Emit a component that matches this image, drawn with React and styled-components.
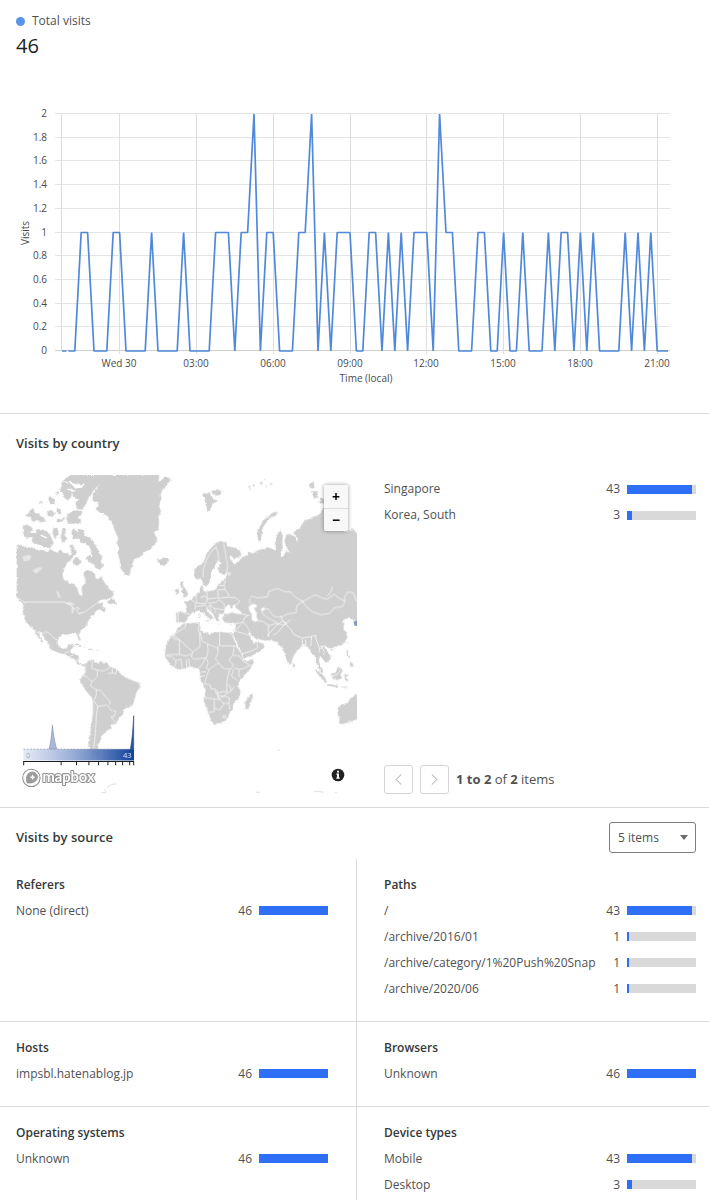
import React from "react"
import styled, { createGlobalStyle } from "styled-components"
import { ChevronLeft, ChevronRight } from "lucide-react"

const font = `"Open Sans", "Noto Sans", sans-serif`
const blue = "#2f6ff5"
const line = "#d9d9d9"

const GlobalStyle = createGlobalStyle`
  * {
    box-sizing: border-box;
  }

  body {
    margin: 0;
    background: #fff;
    color: #4f5153;
    font-family: ${font};
    font-size: 12px;
    line-height: 18px;
  }
`

const Page = styled.main`
  width: 100%;
  overflow: hidden;
`

const ChartSection = styled.section`
  padding: 12px 16px 19px;
  border-bottom: 1px solid ${line};
`

const Legend = styled.div`
  display: flex;
  align-items: center;
  gap: 7px;
`

const Dot = styled.span`
  width: 9px;
  height: 9px;
  border-radius: 50%;
  background: #5a93ea;
`

const Total = styled.div`
  margin-bottom: 40px;
  color: #1d1f20;
  font-size: 20px;
  font-weight: 500;
  line-height: 32px;
`

const Chart = styled.svg`
  display: block;
  width: 100%;
  font-family: ${font};
  font-size: 10px;
  fill: #4a4a4d;
`

const Section = styled.section`
  border-bottom: 1px solid ${line};
`

const Columns = styled.div`
  display: grid;
  grid-template-columns: minmax(0, 357fr) minmax(0, 352fr);
`

const SectionHeader = styled.header`
  display: flex;
  align-items: center;
  justify-content: space-between;
  padding: ${({ $tight }) => ($tight ? "14px 13px 6px 16px" : "19px 16px 22px")};
`

const Title = styled.h2`
  margin: 0;
  color: #36393a;
  font-size: 13px;
  font-weight: 600;
  line-height: 20px;
`

const MapBox = styled.div`
  position: relative;
  margin: 0 0 13px 16px;
`

const MapDrawing = styled.svg`
  display: block;
  width: 100%;
  font-family: ${font};
`

const ZoomControls = styled.div`
  position: absolute;
  top: 10px;
  right: 9px;
  display: flex;
  flex-direction: column;
  width: 24px;
  background: #f8f8f8;
  border-radius: 2px;
  box-shadow: 0 0 4px rgba(0, 0, 0, 0.4);
`

const ZoomButton = styled.button`
  height: 23px;
  padding: 0;
  border: 0;
  background: none;
  color: #000;
  font-family: ${font};
  font-size: 14px;
  font-weight: 700;
  line-height: 22px;

  & + & {
    border-top: 1px solid #ddd;
  }
`

const InfoButton = styled.button`
  position: absolute;
  right: 12px;
  bottom: 12px;
  display: flex;
  padding: 0;
  border: 0;
  background: none;
`

const CountryList = styled.div`
  display: flex;
  flex-direction: column;
  justify-content: space-between;
  padding: 1px 13px 13px 27px;
`

const Table = styled.table`
  width: 100%;
  border-collapse: collapse;
  table-layout: fixed;
`

const NameCell = styled.th`
  height: 26px;
  padding: 0;
  font-weight: 400;
  text-align: left;
  white-space: nowrap;
`

const CountCell = styled.td`
  width: 28px;
  padding: 0 7px 0 0;
  text-align: right;
`

const BarCell = styled.td`
  width: 69px;
  padding: 0;
`

const Track = styled.div`
  height: 9px;
  background: #d9d9d9;
`

const Fill = styled.div`
  min-width: 2px;
  height: 9px;
  background: ${blue};
`

const Pager = styled.nav`
  display: flex;
  align-items: center;
  gap: 7px;
  font-size: 13px;
`

const PageButton = styled.button`
  display: flex;
  align-items: center;
  justify-content: center;
  width: 29px;
  height: 29px;
  padding: 0;
  border: 1px solid #d5d5d5;
  border-radius: 3px;
  background: #fff;
  color: #b3b3b3;
`

const SelectWrap = styled.div`
  position: relative;
`

const Select = styled.select`
  display: block;
  width: 87px;
  height: 31px;
  padding: 0 8px;
  border: 1px solid #7d7d7d;
  border-radius: 3px;
  appearance: none;
  background: #fff;
  color: #4f5153;
  font-family: ${font};
  font-size: 12px;
`

const Caret = styled.span`
  position: absolute;
  top: 13px;
  right: 8px;
  border: 4px solid transparent;
  border-top: 5px solid #6b6b6b;
  border-bottom: 0;
  pointer-events: none;
`

const Panel = styled.article`
  padding: ${({ $right }) => ($right ? "13px 13px 19px 27px" : "13px 28px 19px 16px")};
  border-right: ${({ $right }) => ($right ? "0" : `1px solid ${line}`)};
  border-bottom: 1px solid ${line};

  &:nth-last-child(-n + 2) {
    padding-bottom: 3px;
    border-bottom: 0;
  }
`

const PanelTitle = styled.h3`
  margin: 0;
  color: #36393a;
  font-size: 12px;
  font-weight: 600;
  line-height: 26px;
`

// one sample every 15 minutes
const visits = [
  "0001100011",
  "0000100001",
  "0000111011",
  "2011000112",
  "0101110011",
  "0101011102",
  "1100011001",
  "0010001011",
  "0101000010",
  "10100",
].join("")

const samples = [...visits].map(Number)
const chartX = i => 46 + i * 6.4
const chartY = v => 249 - v * 118.5

const points = list => list.map(([x, y]) => `${x},${y}`).join(" ")

const hours = ["Wed 30", "03:00", "06:00", "09:00", "12:00", "15:00", "18:00", "21:00"]

function VisitsChart() {
  const plotted = samples.map((v, i) => [chartX(i), chartY(v)]).slice(1)
  plotted.push([652, chartY(0)])
  return (
    <Chart viewBox="0 0 677 292" role="img" aria-label="Visits over time">
      {Array.from({ length: 11 }, (_, i) => {
        const y = Math.round(249 - i * 23.7) - 0.5
        return (
          <g key={i}>
            <path d={`M39 ${y}H654`} stroke={i ? "#e4e4e4" : "#cfcfcf"} />
            <text x="31" y={y + 3} textAnchor="end">
              {Number((i * 0.2).toFixed(1))}
            </text>
          </g>
        )
      })}
      <path d="M45.5 12V249" stroke="#dcdcdc" />
      {hours.map((label, i) => {
        const x = Math.floor(103.6 + i * 76.8)
        return (
          <g key={label}>
            <path d={`M${x + 0.5} 12V252`} stroke="#dedede" />
            <text x={x} y="265" textAnchor="middle">
              {label}
            </text>
          </g>
        )
      })}
      <path d="M46 249H50.5" stroke="#5087d6" strokeWidth="1.5" />
      <polyline
        points={points(plotted)}
        fill="none"
        stroke="#5089dc"
        strokeWidth="1.7"
        strokeLinejoin="bevel"
      />
      <text x="350" y="280" textAnchor="middle">
        Time (local)
      </text>
      <text transform="translate(13 131) rotate(-90)" textAnchor="middle">
        Visits
      </text>
    </Chart>
  )
}

const northAmerica = [
  // mainland down to Panama
  "M20 225 30 228 40 232 52 236 62 232 75 240 88 244 100 242 112 250 122 238 130 246 140 250 152 240 158 250 170 252 178 262 184 256 182 240 178 228 188 226 194 240 200 250 192 262 180 272 172 282 162 298 157 315 160 330 172 338 184 342 194 346 200 356 206 372 210 380 216 380 216 368 214 356 224 344 226 330 220 318 222 305 232 302 244 306 254 314 258 328 266 330 272 320 280 334 288 346 296 358 306 366 312 376 300 386 285 390 270 392 262 400 268 404 278 402 276 412 290 420 280 426 268 420 258 424 252 434 244 440 236 452 230 462 228 470 218 480 208 488 206 498 212 512 206 514 200 494 190 492 176 494 165 496 155 494 146 504 142 518 146 532 158 538 170 536 174 526 186 522 190 530 184 540 180 546 188 554 198 556 206 558 206 570 204 578 212 584 222 584 228 584 224 592 214 588 202 584 196 572 180 564 166 554 150 552 130 544 118 536 116 524 104 506 94 492 86 488 90 500 100 518 96 520 84 502 76 490 66 474 52 462 44 450 38 430 40 405 20 385Z",
  // arctic islands
  "M176 18H290L272 40 250 64 236 84 228 104 216 122 200 120 196 100 206 92 190 84 184 70 192 66 174 50 170 38 158 36Z",
  "M156 36 172 44 184 62 184 80 176 94 164 88 158 72 150 64Z",
  "M168 150 172 136 190 124 216 126 214 138 200 144 212 152 212 164 176 164Z",
  "M46 140 60 124 70 116 74 130 88 136 100 144 108 156 92 160 80 152 70 160 60 146Z",
  "M84 100 96 94 96 104ZM114 90 120 80 130 92 136 108 122 104ZM136 68 148 72 140 80ZM112 128 124 122 134 134 128 144 112 140ZM140 116 152 122 150 136 140 132ZM140 150 160 146 158 156 142 160Z",
  "M38 170 54 166 68 178 60 190 76 192 80 180 96 180 116 190 124 206 130 220 120 238 96 230 76 224 64 216 68 204 50 206 40 200Z",
  "M128 178 142 176 146 196 134 210 128 196ZM158 176 168 180 162 196 172 208 156 222 152 200Z",
  "M184 190 192 178 210 180 224 184 222 200 240 206 252 220 262 240 272 252 276 264 272 276 280 290 270 302 256 296 250 284 238 280 228 268 236 260 244 246 236 230 224 224 210 220 204 206 188 212Z",
  "M190 270 200 262 214 280 200 290 186 280ZM290 398 304 386 312 392 320 404 306 404Z",
  // greenland and iceland
  "M290 18 276 30 262 54 248 76 246 88 250 98 264 98 264 110 256 120 270 132 290 140 304 160 314 184 324 210 318 222 326 236 322 252 330 280 330 296 344 316 356 320 362 300 368 280 376 268 394 262 402 248 420 240 436 224 440 208 430 190 444 180 446 160 444 140 452 130 446 110 454 90 450 76 458 60 470 48 480 34 478 26 466 22 452 34 444 38 446 18Z",
  "M438 266 448 272 456 266 470 266 476 274 466 286 452 288 444 280Z",
  // cuba and hispaniola
  "M190 524 204 522 216 530 226 534 212 532ZM232 538 244 538 252 542 236 544ZM258 542 266 542 262 545Z",
]

const southAmerica =
  "M226 104 236 92 248 90 250 98 270 98 288 98 294 108 306 114 322 120 332 134 346 144 366 152 388 160 388 174 378 188 374 206 368 226 352 232 342 238 338 252 326 266 316 284 304 284 302 296 288 304 284 312 272 316 270 336 262 344 264 360 268 376 258 386 244 378 238 360 234 340 240 310 244 280 248 250 248 216 244 202 230 188 218 168 210 156 214 140 226 128 226 114Z"

const russia = [
  "M40 316 42 300 56 288 68 280 74 264 80 248 92 236 104 224 118 216 136 220 142 232 160 234 178 244 182 258 172 268 158 266 150 258 146 262 154 276 160 286 168 280 176 270 186 262 198 258 204 250 216 252 230 244 246 240 262 234 276 240 286 244 284 228 286 206 292 190 300 184 306 200 304 220 306 236 300 262 308 262 316 246 328 252 316 232 310 214 316 198 330 194 344 206 348 220 350 206 336 192 346 182 362 176 366 160 378 152 396 144 416 136 426 118 434 112 436 170 450 176 480 182 500 188 516 180 528 192 534 200V440H490L200 400 130 400 130 330 143 313 129 317 117 313 113 301 119 283 115 273 107 279 101 295 91 307 91 325 85 343 77 351 67 345 63 325 53 331 43 327Z",
  "M64 72 80 74 88 68 96 86 112 96 96 104 90 118 84 130 76 108 72 92ZM92 66 108 60 126 66 118 78 100 80Z",
  "M232 214 230 196 236 176 248 154 262 142 280 128 292 130 282 142 266 148 254 164 244 182 242 200 240 216Z",
  "M384 46 398 38 402 56 390 60ZM390 66 408 66 412 84 400 90ZM418 86 434 92 430 104 416 100Z",
  "M200 54 208 50 210 56ZM214 48 222 46 220 54ZM234 44 246 38 244 48ZM250 50 258 48 256 56ZM264 44 276 42 272 50ZM204 60 212 58 208 63ZM248 34 254 31 252 37Z",
]

const europe = [
  "M230 120 210 136 198 142 186 150 184 160 176 168 160 170 146 172 142 164 140 150 134 160 132 176 126 178 116 186 108 194 96 200 84 202 92 210 94 222 92 234 78 232 62 234 62 262 72 264 82 266 92 260 102 246 108 236 122 230 130 228 138 232 148 242 160 250 168 258 172 248 160 238 150 226 152 222 164 230 172 238 178 250 184 262 190 258 186 242 194 240 204 238 206 242 200 250 204 262 216 266 228 264 240 268 240 278 236 290 232 300 240 316 248 334 258 350 262 366 268 370 288 364 306 354 320 346 328 332 318 326 308 324 298 322 294 324 284 310 276 296 284 296 290 306 302 314 330 318H345V120Z",
  "M76 140 84 142 82 152 90 164 98 178 96 186 80 190 86 180 78 172 82 162 74 152ZM60 166 70 160 70 176 60 182Z",
  "M148 258 162 256 160 262ZM130 240 134 240 134 252 130 250ZM184 268 196 269 190 271ZM222 270 230 268 226 272Z",
]

const africa = [
  "M84 268 100 266 132 264 134 280 136 290 150 294 162 302 172 294 190 292 206 294 226 296 230 302 236 318 246 340 256 358 264 374 272 380 292 376 294 384 284 402 268 420 254 434 246 452 254 470 252 488 238 500 232 510 232 524 222 534 218 546 206 560 190 566 174 568 166 556 158 534 148 508 144 490 150 470 148 456 138 444 132 430 134 416 130 402 116 400 104 394 90 402 66 404 50 396 36 378 28 364 32 330 44 310 60 294 70 276Z",
  "M288 476 292 484 284 508 278 522 270 524 268 508 274 490Z",
]

const asia = [
  "M0 60V178L12 184 18 180 36 184 48 188 54 196 62 204 68 208 72 228 78 244 86 256 92 252 94 240 100 226 110 212 120 204 124 196 134 198 142 204 148 212 152 224 160 226 164 232 166 250 172 262 178 276 186 282 186 270 178 258 174 244 176 232 184 236 190 246 196 250 208 240 208 228 200 216 190 204 196 200 204 204 210 208 218 204 232 200 246 192 256 182 259 170 256 162 250 150 246 140 252 134 244 126 252 122 264 114 274 118 280 126 294 125V60Z",
  "M158 266 170 272 190 290 198 306 194 310 178 292 164 276ZM198 314 214 314 234 320 228 324 200 318Z",
  "M210 282 222 280 234 262 246 272 240 282 240 298 226 302 214 296ZM250 286 264 284 254 292 262 306 252 304ZM238 320 264 322 252 325Z",
  "M256 214 262 212 260 226 270 238 258 230ZM266 246 276 252 276 264 268 260ZM96 250 102 256 100 264 96 262ZM256 188 260 188 258 196ZM208 210 216 209 212 215Z",
  "M294 346 282 344 276 352 268 356 260 370 244 374 230 384 230 402 236 418 234 430 242 434 262 428 294 418Z",
]

const africaBorders =
  "M92 268 88 280 62 296 44 312M56 300V314L72 316V360H34M60 306 112 352 134 336 132 300 128 284 132 268M134 292 140 320 156 328 188 342M192 294V334H240M156 330 158 350 152 370 158 386M188 334 186 358 180 372 190 386M112 352 108 366 114 374 150 370 140 390 130 400M158 386 152 400 160 406 180 390 190 386 204 402 226 404 234 390 220 378 232 360 236 334M232 362 250 364 268 384 282 392 264 402 250 404 236 400M250 404V428M234 404 228 424 246 438M160 406 152 430 146 448 164 450 166 462 180 464 182 478 204 470 214 474 214 440 218 420 222 406M146 490 170 492 190 494 184 466M184 484H204L226 470 224 456 216 450M176 494V530L158 534M176 520 192 526 206 506 190 494 206 484 222 490 220 506H206M220 506 222 524M226 470 236 456M136 412H152M136 424H148M30 364 48 366 58 374 62 384 56 398M72 360 92 364 108 358M76 372 80 400M92 374 94 400M100 372 102 396M62 378 76 374"

const europeBorders =
  "M142 130 144 100 154 74 168 50 184 36M190 78 186 50 180 38M212 118 216 96 210 60 204 30M78 232 104 240M68 236V262M108 196 120 206 118 226M154 168V190M120 178 124 206 150 208M186 168 188 190 154 194M188 192 214 188 240 190 252 200 244 212M186 152 206 154 208 136M186 166 208 166 206 154M208 166 220 182 214 188M178 206 190 196 204 206 208 222M176 222 206 226M160 212 176 222 180 236M122 216 150 212 156 220M156 206 178 204M134 190 148 184 156 194 150 208M168 210 160 216 168 230M234 268 262 264 266 250 276 244M262 264 274 276 286 300M238 290 256 270M238 290 262 296 278 302M258 358 290 348 306 340M250 236 282 244M294 258 320 260 338 272V308M306 340 304 326"

const russiaBorders =
  "M208 404 206 390 214 380 232 386 260 382 264 366 290 358 310 366 330 368 344 384 366 396 348 408 346 430 318 434 300 444M240 420 262 418 278 440 300 444M242 418 244 432 262 446 290 460M262 470 284 462 308 466 330 450M366 396 376 412 396 428 420 436 446 432 460 416 486 410 492 396 470 384 460 374 438 390 420 384 404 376 392 382 366 396M492 396 490 384 500 368 518 370 524 392 530 396M438 380 450 368 454 352"

const asiaBorders =
  "M36 168 50 160 66 140 78 132 66 124 90 150 100 166 124 176 150 172M66 124 60 108M20 170 36 150 50 136 66 124M124 178 126 196 136 196 134 180M152 170 150 200M152 170 166 168 164 176 176 206 174 220M180 200 190 216 188 226M178 200 196 200M176 208 186 204M214 288 228 286 238 272"

const southAmericaBorders =
  "M246 94 244 116 262 122 260 142 246 156 230 142 216 136M246 156 240 168 258 180 258 196 252 210M262 122 282 124 298 114M306 116V130M318 120V132L306 130 292 132M258 180 272 184 288 204 300 216 298 226M250 212 262 230 258 260 256 300 250 360M262 230 290 226 304 242 316 244 312 260 302 262 316 278"

const legendTicks = [41, 153, 199, 236, 265, 293, 316, 337, 358, 370]

const Land = ({ shapes, ...rest }) => (
  <g {...rest}>
    {shapes.map(d => (
      <path key={d} d={d} />
    ))}
  </g>
)

function WorldMap() {
  return (
    <MapDrawing viewBox="18 18 1020 954" role="img" aria-label="World map of visits">
      <defs>
        <linearGradient id="scale">
          <stop offset="0" stopColor="#dfe5f3" stopOpacity="0.8" />
          <stop offset="0.45" stopColor="#8da4d2" stopOpacity="0.9" />
          <stop offset="1" stopColor="#10409c" />
        </linearGradient>
        <filter id="coast" x="0" y="0" width="100%" height="100%">
          <feTurbulence type="fractalNoise" baseFrequency="0.1" numOctaves="2" seed="4" />
          <feDisplacementMap in="SourceGraphic" scale="9" xChannelSelector="R" yChannelSelector="G" />
        </filter>
      </defs>

      <g fill="#cfcfcf" filter="url(#coast)">
        <Land shapes={northAmerica} />
        <Land shapes={[southAmerica]} transform="translate(0 480)" />
        <Land shapes={russia} transform="translate(510 0)" />
        <Land shapes={europe} transform="translate(435 195)" />
        <Land shapes={africa} transform="translate(435 195)" />
        <Land shapes={asia} transform="translate(750 330)" />
      </g>

      {/* inland seas */}
      <g fill="#fff" transform="translate(435 195)">
        <path d="M204 236 208 220 218 210 226 216 222 222 232 222 230 214 242 208 238 218 256 232 258 238 244 238 228 234 214 240Z" />
        <path d="M280 216 290 208 302 210 302 218 294 222 304 236 302 244 306 258 298 262 288 256 288 240 280 226Z" />
        <path d="M318 222 326 218 326 228 320 230Z" />
      </g>
      <g fill="#e6e6e6">
        <path d="M36 262 58 256 64 264 56 274 42 276ZM68 302 84 294 98 294 84 310 74 312ZM138 364 146 368 152 386 144 384ZM164 402 180 396 196 406 184 408ZM184 412 192 414 190 432 184 432ZM196 410 210 416 204 424ZM204 432 220 426 206 436ZM650 308 660 308 660 318 652 320Z" />
      </g>

      <g fill="none" stroke="#fff" strokeWidth="2" strokeLinejoin="round">
        <path d="M24 384 46 402M42 398H164L182 408 200 424 206 434 226 426 248 410 262 400" />
        <path d="M66 486 84 488 100 492 108 486 120 494 134 508 144 512M158 560 166 548 176 546M176 562 190 556M196 572 206 570" />
        <path d={southAmericaBorders} transform="translate(0 480)" />
        <path d={russiaBorders} transform="translate(510 0)" />
        <path d={europeBorders} transform="translate(435 195)" />
        <path d={africaBorders} transform="translate(435 195)" />
        <path d={asiaBorders} transform="translate(750 330)" />
        <circle cx="641" cy="741" r="4" />
      </g>
      <path d="M192 182 200 176 206 190ZM176 40 200 56 220 50" fill="#fff" />
      <path
        d="M178 36 196 56 214 54 222 44M172 60 194 66M204 44 212 54M92 198 110 206M236 246 246 262"
        fill="none"
        stroke="#fff"
        strokeWidth="4"
      />
      <path
        d="M274 968H286L284 958M290 952 304 944 318 942M735 967H748M908 966 920 964 938 967M972 967H978M801 841H808"
        fill="none"
        stroke="#cfcfcf"
        strokeWidth="2"
      />
      <path d="M1028 456 1038 454V470L1030 468Z" fill="#8499bd" />

      {/* colour scale with its histogram */}
      <g transform="translate(0 480)">
        <path d="M117 358C122 340 125 310 127 286 129 310 134 340 140 358Z" fill="#a9b9dc" stroke="#8493b5" strokeWidth="2" />
        <path d="M360 358C366 330 368 290 370 258V358Z" fill="#244f9f" stroke="#3c5480" strokeWidth="2" />
        <rect x="40" y="358" width="331" height="34" fill="url(#scale)" />
        <path d="M40 358H360" stroke="#8d97ad" strokeWidth="2" strokeDasharray="6 4" />
        <path d="M40 395H371" stroke="#1c1c1c" strokeWidth="3" />
        {legendTicks.map(x => (
          <path key={x} d={`M${x} 394V406`} stroke="#1c1c1c" strokeWidth="3" />
        ))}
        <text x="48" y="385" fontSize="23" fill="#fff" stroke="#a9a9a9" strokeWidth="1">0</text>
        <text x="364" y="385" fontSize="23" fill="#dfe6f5" textAnchor="end">43</text>
      </g>

      {/* mapbox mark */}
      <g transform="translate(0 480)" fill="#fff" stroke="#8f8f8f">
        <circle cx="64" cy="444" r="26" strokeWidth="3" />
        <path d="M51 459C47 445 49 436 56 430 64 424 76 426 80 434 85 444 80 453 71 457 64 460 58 460 51 459Z" fill="#9c9c9c" strokeWidth="2" />
        <path d="M68 433 70 439 76 442 70 445 68 451 65 445 59 442 65 439Z" strokeWidth="0" />
        <text
          x="97"
          y="455"
          fontFamily="Lato, sans-serif"
          fontSize="44"
          fontWeight="700"
          strokeWidth="6"
          strokeLinejoin="round"
          paintOrder="stroke"
        >
          mapbox
        </text>
      </g>
    </MapDrawing>
  )
}

const countries = [
  ["Singapore", 43],
  ["Korea, South", 3],
]

const panels = [
  { title: "Referers", rows: [["None (direct)", 46]] },
  {
    title: "Paths",
    rows: [
      ["/", 43],
      ["/archive/2016/01", 1],
      ["/archive/category/1%20Push%20Snap", 1],
      ["/archive/2020/06", 1],
    ],
  },
  { title: "Hosts", rows: [["impsbl.hatenablog.jp", 46]] },
  { title: "Browsers", rows: [["Unknown", 46]] },
  { title: "Operating systems", rows: [["Unknown", 46]] },
  { title: "Device types", rows: [["Mobile", 43], ["Desktop", 3]] },
]

const StatTable = ({ rows, label }) => (
  <Table aria-label={label}>
    <tbody>
      {rows.map(([name, count]) => (
        <tr key={name}>
          <NameCell scope="row">{name}</NameCell>
          <CountCell>{count}</CountCell>
          <BarCell>
            <Track>
              <Fill style={{ width: `${(count / 46) * 100}%` }} />
            </Track>
          </BarCell>
        </tr>
      ))}
    </tbody>
  </Table>
)

export default function App() {
  return (
    <Page>
      <GlobalStyle />
      <ChartSection>
        <Legend>
          <Dot />
          Total visits
        </Legend>
        <Total>46</Total>
        <VisitsChart />
      </ChartSection>

      <Section>
        <SectionHeader>
          <Title>Visits by country</Title>
        </SectionHeader>
        <Columns>
          <MapBox>
            <WorldMap />
            <ZoomControls>
              <ZoomButton type="button" aria-label="Zoom in">+</ZoomButton>
              <ZoomButton type="button" aria-label="Zoom out">−</ZoomButton>
            </ZoomControls>
            <InfoButton type="button" aria-label="Map information">
              <svg width="14" height="14" viewBox="0 0 14 14">
                <circle cx="7" cy="7" r="6.3" fill="#222" />
                <path d="M6 2.7H8V4.5H6ZM5.4 5.6H8V9.6H8.7V10.8H5.3V9.6H6V6.8H5.4Z" fill="#fff" />
              </svg>
            </InfoButton>
          </MapBox>
          <CountryList>
            <StatTable rows={countries} label="Visits by country" />
            <Pager aria-label="Country pages">
              <PageButton type="button" aria-label="Previous page">
                <ChevronLeft size={19} strokeWidth={1.3} />
              </PageButton>
              <PageButton type="button" aria-label="Next page">
                <ChevronRight size={19} strokeWidth={1.3} />
              </PageButton>
              <span>
                <b>1 to 2</b> of <b>2</b> items
              </span>
            </Pager>
          </CountryList>
        </Columns>
      </Section>

      <section>
        <SectionHeader $tight>
          <Title>Visits by source</Title>
          <SelectWrap>
            <Select aria-label="Items per list" defaultValue="5">
              <option value="5">5 items</option>
              <option value="10">10 items</option>
            </Select>
            <Caret />
          </SelectWrap>
        </SectionHeader>
        <Columns>
          {panels.map(({ title, rows }, i) => (
            <Panel key={title} $right={i % 2 === 1}>
              <PanelTitle>{title}</PanelTitle>
              <StatTable rows={rows} label={title} />
            </Panel>
          ))}
        </Columns>
      </section>
    </Page>
  )
}
